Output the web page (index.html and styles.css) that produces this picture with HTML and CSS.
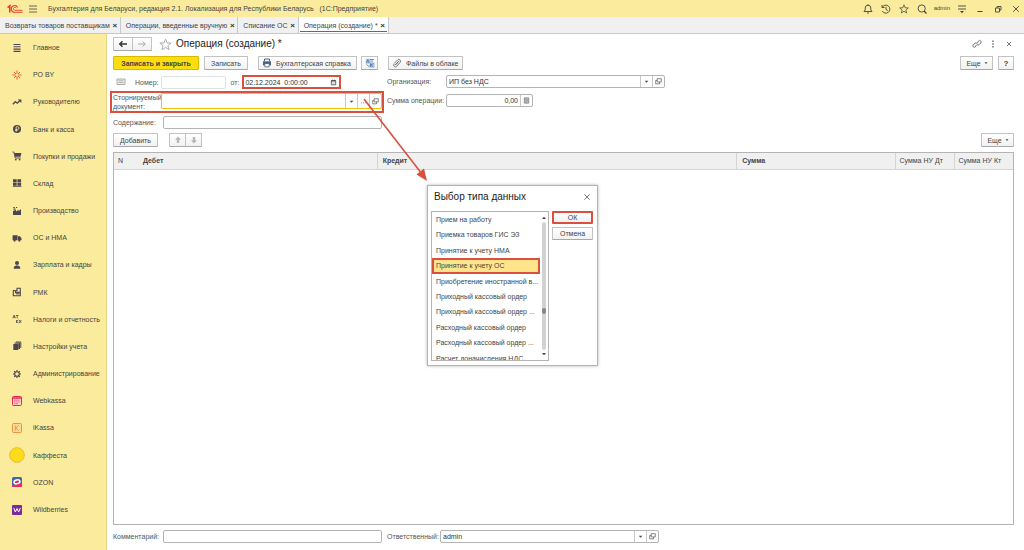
FILE: index.html
```html
<!DOCTYPE html>
<html lang="ru">
<head>
<meta charset="utf-8">
<title>Операция (создание) *</title>
<link rel="stylesheet" href="styles.css">
</head>
<body>
<svg class="defs" aria-hidden="true">
  <symbol id="open" viewBox="0 0 8 8"><path d="M2.5.8h4.7v3.7H2.5zM2.5 2.8H.8v3.9h4.4V4.5" fill="none" stroke="#555" stroke-width=".8"/></symbol>
  <symbol id="down" viewBox="0 0 8 8"><path d="M2 3h4L4 5.3z" fill="#444"/></symbol>
  <symbol id="star" viewBox="0 0 12 12"><path d="M6 1l1.4 3.5 3.8.2-3 2.4 1 3.7L6 8.7l-3.200 2.100 1-3.700-3-2.400 3.800-.2z" fill="none" stroke="currentColor" stroke-width=".9"/></symbol>
</svg>
<header class="topbar">
  <svg class="logo" viewBox="0 0 16 10"><g fill="none" stroke="#e5402f"><path d="M.6 3.600L2.800 1.800V8.600" stroke-width="1.600"/><path d="M10.600 3.500A3.300 3.300 0 1 0 7.900 8.200H15.500" stroke-width="1.100"/><path d="M9.300 4A1.500 1.500 0 1 0 7.900 6.300H15.500" stroke-width=".9"/></g></svg>
  <button class="icon-btn" aria-label="Меню"><svg viewBox="0 0 10 10"><path d="M1 2h8M1 5h8M1 8h8" stroke="#555" stroke-width=".9"/></svg></button>
  <span class="app-title">Бухгалтерия для Беларуси, редакция 2.1. Локализация для Республики Беларусь &nbsp; (1С:Предприятие)</span>
  <div class="top-tools">
    <button class="icon-btn" aria-label="Уведомления"><svg viewBox="0 0 10 10"><path d="M1 7.500h8L7.800 6V4a2.800 2.800 0 0 0-5.600 0v2zM4 9h2M5 .3v1" fill="none" stroke="#444" stroke-width=".9"/></svg></button>
    <button class="icon-btn" aria-label="История"><svg viewBox="0 0 10 10"><path d="M1 1v2.500h2.500M1.300 3.300A4 4 0 1 1 1.300 7M5 2.800V5.500l1.800 1" fill="none" stroke="#444" stroke-width=".9"/></svg></button>
    <button class="icon-btn" aria-label="Избранное"><svg viewBox="0 0 12 12"><use href="#star"/></svg></button>
    <button class="icon-btn" aria-label="Поиск"><svg viewBox="0 0 10 10"><circle cx="4.700" cy="4.500" r="3.600" fill="none" stroke="#444" stroke-width=".9"/><path d="M7 7l2.500 2.500" stroke="#444" stroke-width="1.200"/></svg></button>
    <span class="user">admin</span>
    <button class="icon-btn" aria-label="Настройки"><svg viewBox="0 0 10 10"><path d="M1 2h8M1 5h8" stroke="#444" stroke-width=".9"/><path d="M3 7h4L5 9.300z" fill="#444"/></svg></button>
    <div class="window-tools">
      <button class="icon-btn" aria-label="Свернуть"><svg viewBox="0 0 10 10"><path d="M2.500 7.500h5" stroke="#444"/></svg></button>
      <button class="icon-btn" aria-label="Восстановить"><svg viewBox="0 0 10 10"><path d="M2.500 4h4v4h-4zM4 4V2.500h4V6H6.500" fill="none" stroke="#444" stroke-width=".9"/></svg></button>
      <button class="icon-btn" aria-label="Закрыть"><svg viewBox="0 0 10 10"><path d="M2.200 2.200l5.600 5.600M7.800 2.200L2.200 7.800" stroke="#444" stroke-width=".9"/></svg></button>
    </div>
  </div>
</header>
<nav class="tabs" aria-label="Открытые окна">
  <div class="tab"><a href="#">Возвраты товаров поставщикам</a><button aria-label="Закрыть">×</button></div>
  <div class="tab"><a href="#">Операции, введенные вручную</a><button aria-label="Закрыть">×</button></div>
  <div class="tab"><a href="#">Списание ОС</a><button aria-label="Закрыть">×</button></div>
  <div class="tab active"><a href="#">Операция (создание) *</a><button aria-label="Закрыть">×</button></div>
</nav>
<div class="workspace">
  <nav class="sidebar" aria-label="Разделы">
    <a href="#"><svg viewBox="0 0 10 10"><path d="M1.500 1.500h7M1.500 3.800h7M1.500 6.100h7M1.500 8.400h7" stroke="#4c4650" stroke-width="1.100"/></svg>Главное</a>
    <a href="#"><svg viewBox="0 0 10 10"><path d="M5 .5v3.200M5 6.300v3.200M.5 5h3.200M6.300 5h3.200M2 2l2 2M6 6l2 2M8 2L6 4M4 6L2 8" stroke="#e8442c" stroke-width=".9"/></svg>РО BY</a>
    <a href="#"><svg viewBox="0 0 10 10"><path d="M.8 7.200l2.500-2.500 2 1.500L8 3.500" fill="none" stroke="#4c4650" stroke-width="1.300"/><path d="M5.800 2.400h3.600V6z" fill="#4c4650"/></svg>Руководителю</a>
    <a href="#"><svg viewBox="0 0 10 10"><circle cx="5" cy="5" r="4" fill="#4c4650"/><path d="M4.200 7.700V2.700h1.400a1.300 1.300 0 0 1 0 2.700H3.200M3.200 6.500h2.400" fill="none" stroke="#fbea9a" stroke-width=".8"/></svg>Банк и касса</a>
    <a href="#"><svg viewBox="0 0 10 10"><path d="M2.200 2h7.200L8.500 5.800H3z" fill="#4c4650"/><path d="M.5 1h1.400l1.300 6h5.500" fill="none" stroke="#4c4650" stroke-width=".9"/><circle cx="3.800" cy="8.600" r=".9" fill="#4c4650"/><circle cx="7.600" cy="8.600" r=".9" fill="#4c4650"/></svg>Покупки и продажи</a>
    <a href="#"><svg viewBox="0 0 10 10"><path d="M1 1.200h3.700v3.300H1zM5.400 1.200h3.700v3.300H5.400zM1 5.100h3.700v2.700H1zM5.400 5.100h3.700v2.700H5.400zM.7 8.200h8.800v.9H.7z" fill="#4c4650"/></svg>Склад</a>
    <a href="#"><svg viewBox="0 0 10 10"><path d="M1 9V5L4 3.700v1.800L6.500 3.700v1.500L9 2.900V9z" fill="#4c4650"/><path d="M1.200 1.500h1.500M1.500 3.200h2M4 1.500h1.200" stroke="#4c4650" stroke-width="1.200"/></svg>Производство</a>
    <a href="#"><svg viewBox="0 0 10 10"><path d="M.6 2.200h5v5h-5zM6 3.300h2l1.500 2v1.900H6z" fill="#4c4650"/><circle cx="2.600" cy="7.600" r="1.100" fill="#4c4650"/><circle cx="7.300" cy="7.600" r="1.100" fill="#4c4650"/></svg>ОС и НМА</a>
    <a href="#"><svg viewBox="0 0 10 10"><circle cx="5" cy="3" r="2" fill="#4c4650"/><path d="M1.800 8.800V7.500C1.800 6.200 3.500 6 4.300 5.500h1.400c.8.500 2.500.7 2.500 2v1.300z" fill="#4c4650"/></svg>Зарплата и кадры</a>
    <a href="#"><svg viewBox="0 0 10 10"><path d="M1 3.500h2.500M1.300 3.500v5.200h7V1.200H5v2.500H3.500v2H8" fill="none" stroke="#4c4650" stroke-width="1.100"/><path d="M4 4.500h3.500v3H4z" fill="#4c4650" opacity=".7"/></svg>РМК</a>
    <a href="#"><svg viewBox="0 0 10 10"><g fill="none" stroke="#4c4650" stroke-width=".8"><path d="M.8 4.300L2.200 1l1.200 3.300M1.300 3.200h1.700M4 1.500h2.500M5.200 1.500v2.800M4.500 6v3M6.500 6l-2 1.500 2 1.500M7.200 6l2 3M9.200 6l-2 3"/></g></svg>Налоги и отчетность</a>
    <a href="#"><svg viewBox="0 0 10 10"><path d="M1.300 3h5v6h-5z" fill="#4c4650"/><path d="M2.500 2h5v6M4 1h4.800v6" fill="none" stroke="#4c4650"/><path d="M3 2.500h4.500V8H6.500z" fill="#4c4650" opacity=".7"/></svg>Настройки учета</a>
    <a href="#"><svg viewBox="0 0 10 10"><circle cx="5" cy="5" r="2.300" fill="none" stroke="#4c4650" stroke-width="1.100"/><path d="M5 1v1.500M5 7.500V9M1 5h1.500M7.500 5H9M2.200 2.200l1 1M6.800 6.800l1 1M7.800 2.200l-1 1M3.200 6.800l-1 1" stroke="#4c4650" stroke-width="1.200"/></svg>Администрирование</a>
    <a href="#"><svg viewBox="0 0 10 10"><rect x=".5" y=".5" width="9" height="9" rx="1" fill="#fbd3d2" stroke="#e9294f"/><path d="M.5 2h9" stroke="#e9294f" stroke-width="1.500"/><path d="M2.200 4.200h5.600M2.200 6h5.600M2.200 7.800h3.600" stroke="#e9294f" stroke-width=".8" stroke-dasharray="1.300 .7"/></svg>Webkassa</a>
    <a href="#"><svg viewBox="0 0 10 10"><rect x=".5" y=".5" width="9" height="9" rx="1" fill="#fbdc96" stroke="#e58a3c" stroke-width=".9"/><path d="M3.300 2.300v5.400M6.800 2.300L3.600 5l3.200 2.700" fill="none" stroke="#e58a3c" stroke-width=".8"/></svg>iKassa</a>
    <a href="#"><svg class="big" viewBox="0 0 16 16"><circle cx="8" cy="8" r="7.300" fill="#fbdc1a" stroke="#e2a22c" stroke-width=".9" stroke-dasharray="1.500 .5"/></svg>Каффеста</a>
    <a href="#"><svg viewBox="0 0 10 10"><rect width="10" height="10" rx="1.500" fill="#3d67b1"/><path d="M0 7.500c3 1 7 0 10-2v3A1.500 1.500 0 0 1 8.500 10h-7A1.500 1.500 0 0 1 0 8.500z" fill="#ef2c57"/><ellipse cx="5" cy="4.800" rx="3" ry="1.900" transform="rotate(-15 5 4.800)" fill="#e4294f" stroke="#fff" stroke-width="1.500"/></svg>OZON</a>
    <a href="#"><svg viewBox="0 0 10 10"><rect width="10" height="10" rx="1" fill="#7d2a9a"/><path d="M1.800 3l1.500 4L5 3.500 6.600 7l1.700-4" fill="none" stroke="#fff"/></svg>Wildberries</a>
  </nav>
  <main class="main">
    <div class="row head">
      <div class="pair">
        <button class="btn" aria-label="Назад"><svg viewBox="0 0 10 10"><path d="M9 5H2M4.500 2.300L1.700 5l2.800 2.700" fill="none" stroke="#333" stroke-width="1.400"/></svg></button>
        <button class="btn" aria-label="Вперед"><svg viewBox="0 0 10 10"><path d="M1 5h7M5.500 2.300L8.300 5 5.500 7.700" fill="none" stroke="#aaa"/></svg></button>
      </div>
      <button class="icon-btn fav" aria-label="В избранное"><svg viewBox="0 0 12 12"><use href="#star"/></svg></button>
      <h1>Операция (создание) *</h1>
      <div class="head-tools">
        <button class="icon-btn" aria-label="Ссылка"><svg viewBox="0 0 10 10"><path d="M4.500 5.700L3.300 7.900a1.500 1.500 0 0 1-2.200-2L3 4.200a1.500 1.500 0 0 1 2 .2M5.300 4.300L6.500 2a1.500 1.500 0 0 1 2.300 2L7 5.800a1.500 1.500 0 0 1-2-.2" fill="none" stroke="#666" stroke-width=".9"/></svg></button>
        <button class="icon-btn" aria-label="Действия"><svg viewBox="0 0 10 10"><path d="M4.300 1.500h1.400v1.400H4.300zM4.300 4.300h1.400v1.400H4.300zM4.300 7.100h1.400v1.400H4.300z" fill="#666"/></svg></button>
        <button class="icon-btn" aria-label="Закрыть"><svg viewBox="0 0 10 10"><path d="M3 3l4 4M7 3L3 7" stroke="#666" stroke-width=".9"/></svg></button>
      </div>
    </div>
    <div class="row toolbar">
      <button class="btn primary">Записать и закрыть</button>
      <button class="btn save">Записать</button>
      <button class="btn report"><svg viewBox="0 0 10 10"><path d="M2.500 3V1h5v2" fill="none" stroke="#476080"/><path d="M1 3.300h8v4H1z" fill="#476080"/><path d="M2.800 5.500h4.400v3.300H2.800z" fill="#fff" stroke="#476080" stroke-width=".8"/></svg>Бухгалтерская справка</button>
      <button class="btn square" aria-label="Дт Кт"><svg viewBox="0 0 10 10"><path d="M.8.8h5v5h-5zM4.500 4.500h5v5h-5z" fill="#a9c5e0"/><path d="M1.500 5l1.300-3.500L4.200 5M5 1.500h4M7 1.500v3M1.500 6.500l3 2.500M5.500 5.500v3.500M8.500 5.500l-3 1.700 3 1.800" stroke="#4678a8" stroke-width=".8" fill="none"/></svg></button>
      <button class="btn files"><svg viewBox="0 0 10 10"><path d="M3 6.500l3-3.300M1.800 5.200L5 1.800a1.700 1.700 0 0 1 2.700 0 1.700 1.700 0 0 1 0 2.300L4.300 8a1.700 1.700 0 0 1-2.600-2.300M3 6.800l3.600-4" transform="translate(.4 .3)" fill="none" stroke="#666" stroke-width=".9"/></svg>Файлы в облаке</button>
      <button class="btn more push">Еще<svg class="caret"><use href="#down"/></svg></button>
      <button class="btn help">?</button>
    </div>
    <form class="form">
      <div class="number-row">
        <svg class="status" viewBox="0 0 10 8"><path d="M1 1h8v5.500H1z" fill="#eee" stroke="#999" stroke-width=".8"/><path d="M2.500 2.800h5M2.500 4.500h5" stroke="#999" stroke-width=".7"/></svg>
        <label for="num">Номер:</label>
        <span class="field pale num"><input id="num"></span>
        <label class="from" for="date">от:</label>
        <span class="field marked date"><input id="date" value="02.12.2024&nbsp; 0:00:00"><button type="button" aria-label="Календарь"><svg viewBox="0 0 8 8"><path d="M1.500 2h5v4.700h-5z" fill="#ddd" stroke="#444" stroke-width=".8"/><path d="M1.200 2h5.600M2.700.8v1M5.300.8v1" stroke="#444"/></svg></button></span>
      </div>
      <div class="cell">
        <label class="right-label" for="org">Организация:</label>
        <span class="field org"><input id="org" value="ИП без НДС"><button type="button" aria-label="Выбрать"><svg><use href="#down"/></svg></button><button type="button" aria-label="Открыть"><svg><use href="#open"/></svg></button></span>
      </div>
      <div class="storno">
        <label for="doc">Сторнируемый документ:</label>
        <span class="field focus"><input id="doc"><button type="button" aria-label="Список"><svg><use href="#down"/></svg></button><button type="button" aria-label="Выбрать"><svg viewBox="0 0 8 8"><path d="M1 5.500h1M3.500 5.500h1M6 5.500h1" stroke="#777"/></svg></button><button type="button" aria-label="Открыть"><svg><use href="#open"/></svg></button></span>
      </div>
      <div class="cell">
        <label class="right-label" for="sum">Сумма операции:</label>
        <span class="field sum"><input id="sum" value="0,00"><button type="button" aria-label="Калькулятор"><svg viewBox="0 0 8 8"><path d="M1.500 1h5v6h-5z" fill="#ddd" stroke="#666" stroke-width=".8"/><path d="M2.300 2.500h3.400M2.500 4.200h3M2.500 5.700h3" stroke="#666" stroke-width=".7"/></svg></button></span>
      </div>
      <div class="cell content">
        <label class="left-label" for="text">Содержание:</label>
        <span class="field"><input id="text"></span>
      </div>
    </form>
    <div class="row commands">
      <button class="btn add">Добавить</button>
      <div class="pair arrows">
        <button class="btn" aria-label="Вверх"><svg viewBox="0 0 10 10"><path d="M5 1.500l3 3.200H6.200v3.300H3.800V4.700H2z" fill="#b4b8bc"/></svg></button>
        <button class="btn" aria-label="Вниз"><svg viewBox="0 0 10 10"><path d="M5 8.500l3-3.200H6.200V2H3.800v3.300H2z" fill="#b4b8bc"/></svg></button>
      </div>
      <button class="btn more push">Еще<svg class="caret"><use href="#down"/></svg></button>
    </div>
    <div class="grid">
      <table>
        <colgroup><col class="c-n"><col class="c-debit"><col class="c-credit"><col class="c-sum"><col class="c-nu"><col class="c-nu"></colgroup>
        <thead><tr><th class="light">N</th><th>Дебет</th><th>Кредит</th><th>Сумма</th><th class="light">Сумма НУ Дт</th><th class="light">Сумма НУ Кт</th></tr></thead>
      </table>
    </div>
    <footer class="foot">
      <div class="cell">
        <label class="left-label" for="comment">Комментарий:</label>
        <span class="field"><input id="comment"></span>
      </div>
      <div class="cell">
        <label class="resp-label" for="resp">Ответственный:</label>
        <span class="field"><input id="resp" value="admin"><button type="button" aria-label="Выбрать"><svg><use href="#down"/></svg></button><button type="button" aria-label="Открыть"><svg><use href="#open"/></svg></button></span>
      </div>
    </footer>
  </main>
</div>
<svg class="pointer" viewBox="0 0 66 86" aria-hidden="true"><path d="M1 1l58 75" stroke="#d9503f" stroke-width="1.600"/><path d="M64 83l-10.500-6.500 7.500-6z" fill="#d9503f"/></svg>
<section class="dialog" role="dialog" aria-labelledby="dlg">
  <div class="dialog-head"><h2 id="dlg">Выбор типа данных</h2><button class="icon-btn" aria-label="Закрыть"><svg viewBox="0 0 10 10"><path d="M2.300 2.300l5.400 5.400M7.700 2.300L2.300 7.700" stroke="#555" stroke-width=".8"/></svg></button></div>
  <div class="dialog-body">
    <div class="list">
      <ul role="listbox" aria-label="Типы данных">
        <li role="option">Прием на работу</li>
        <li role="option">Приемка товаров ГИС ЭЗ</li>
        <li role="option">Принятие к учету НМА</li>
        <li role="option" class="selected" aria-selected="true">Принятие к учету ОС</li>
        <li role="option">Приобретение иностранной в...</li>
        <li role="option">Приходный кассовый ордер</li>
        <li role="option">Приходный кассовый ордер ...</li>
        <li role="option">Расходный кассовый ордер</li>
        <li role="option">Расходный кассовый ордер ...</li>
        <li role="option">Расчет доначисления НДС</li>
      </ul>
      <div class="scroll"><svg viewBox="0 0 8 8"><path d="M2 5h4L4 2.800z" fill="#444"/></svg><div class="track"><div class="thumb"></div></div><svg><use href="#down"/></svg></div>
    </div>
    <div class="dialog-buttons"><button class="btn ok">ОК</button><button class="btn">Отмена</button></div>
  </div>
</section>
</body>
</html>
```
FILE: styles.css
```css
* { box-sizing: border-box; }
body {
  margin: 0;
  min-height: 100vh;
  display: flex;
  flex-direction: column;
  position: relative;
  background: #fff;
  color: #444;
  font: 7px/9px "Liberation Sans", Arial, sans-serif;
}
.defs { position: absolute; width: 0; height: 0; }
button, input { font: inherit; color: inherit; margin: 0; padding: 0; }
a { color: inherit; text-decoration: none; }
svg { display: block; flex: none; width: 8px; height: 8px; }
h1, h2 { margin: 0; font-weight: normal; color: #222; }
label { color: #555; }

.icon-btn { border: 0; background: none; display: flex; align-items: center; justify-content: center; width: 10px; height: 10px; }
.icon-btn svg { width: 10px; height: 10px; }

.topbar { display: flex; align-items: center; height: 17px; background: #fbeb9c; padding: 0 3px 0 7px; }
.logo { width: 16px; height: 10px; margin-right: 5px; }
.app-title { margin-left: 10px; white-space: nowrap; }
.top-tools { margin-left: auto; display: flex; align-items: center; gap: 8px; color: #444; }
.user { margin: 0 -1px; font-size: 6px; }
.window-tools { display: flex; gap: 8px; }

.tabs { display: flex; height: 17px; background: #f0f0f0; border-bottom: 1px solid #c8c8c8; }
.tab { display: flex; align-items: center; gap: 2px; padding: 0 2px 0 5px; border-right: 1px solid #c8c8c8; white-space: nowrap; }
.tab button { border: 0; background: none; width: 6px; font-size: 8px; font-weight: bold; color: #333; }
.tab.active { position: relative; background: #fff; }
.tab.active::after { content: ""; position: absolute; left: 1px; right: 1px; bottom: 1px; height: 1px; background: #13965a; }

.workspace { flex: 1; display: flex; }
.sidebar { width: 107px; flex: none; display: flex; flex-direction: column; padding: 0 0 27px; background: #fbeb9c; border-right: 1px solid #e6d68c; }
.sidebar a { flex: 1; display: grid; grid-template-columns: 16px 1fr; column-gap: 8px; align-items: center; padding: 0 0 0 9px; white-space: nowrap; }
.sidebar svg { width: 10px; height: 10px; justify-self: center; }
.sidebar .big { width: 16px; height: 16px; }

.main { flex: 1; min-width: 0; display: flex; flex-direction: column; padding: 3px 10px 7px 6px; }
.row { display: flex; align-items: center; height: 14px; }
.btn {
  display: flex; align-items: center; justify-content: center; gap: 4px;
  height: 14px; padding: 0 7px;
  border: 1px solid #c2c2c2; border-bottom-color: #a8a8a8; border-radius: 1px;
  background: linear-gradient(#fff, #f1f1f1);
  white-space: nowrap;
}
.btn svg { width: 10px; height: 10px; }
.btn .caret { width: 6px; height: 6px; }
.primary { background: #fbdd10; border-color: #d9b800; font-weight: bold; min-width: 86px; }
.pair { display: flex; }
.pair .btn { width: 20px; padding: 0; }
.pair .btn + .btn { margin-left: -1px; }
.fav { width: 14px; height: 14px; margin: 0 4px 0 6px; color: #aaa; }
.fav svg { width: 13px; height: 13px; }
h1 { font-size: 10px; line-height: 14px; }
.head-tools { margin-left: auto; display: flex; gap: 6px; }
.toolbar { margin-top: 5px; }
.save { margin-left: 5px; min-width: 44px; padding: 0 5px; }
.report { margin-left: 10px; min-width: 99px; }
.report, .files { justify-content: flex-start; padding: 0 3px; }
.square { margin-left: 4px; width: 17px; padding: 0; }
.files { margin-left: 10px; min-width: 75px; }
.push { margin-left: auto; }
.more { width: 33px; padding: 0 2px 0 4px; gap: 2px; }
.help { margin-left: 5px; width: 16px; padding: 0; font-size: 8px; font-weight: bold; }

.form { display: grid; grid-template-columns: 269fr 278fr 344fr; column-gap: 5px; row-gap: 2px; align-items: start; margin-top: 5px; }
.number-row, .cell { display: flex; align-items: center; grid-column: 1; }
.form .number-row + .cell, .form .storno + .cell { grid-column: 2; }
.form .storno + .cell { margin-top: 3px; }
.status { width: 10px; height: 8px; margin: 0 9px 0 3px; }
.field { display: flex; flex: 1; min-width: 0; height: 13px; border: 1px solid #b4b4b4; border-radius: 2px; background: #fff; }
.field input { flex: 1; width: 0; min-width: 0; border: 0; outline: 0; background: none; padding: 0 2px; color: #333; }
.field button { width: 12px; border: 0; border-left: 1px solid #c8c8c8; background: none; display: flex; align-items: center; justify-content: center; }
.field svg { width: 7px; height: 7px; }
.pale { border-color: #e0e0e0; }
.num { flex: none; width: 65px; margin-left: 2px; }
.from { margin: 0 3px 0 5px; }
.marked { border: 2px solid #d9503f; border-radius: 0; }
.date { flex: none; width: 99px; height: 14px; }
.date input { padding: 0 1px; }
.date button { border-left: 0; }
.right-label { width: 59px; white-space: nowrap; }
.left-label { width: 50px; }
.resp-label { width: 53px; white-space: nowrap; }
.sum { flex: none; width: 87px; }
.sum input { text-align: right; }
.storno { grid-column: 1; display: flex; align-items: flex-start; margin: 0 -2px 0 -3px; padding-left: 1px; border: 2px solid #d9503f; height: 22px; }
.storno label { width: 48px; flex: none; }
.focus { height: 16px; border-color: #f0c400; }
.content { margin-top: 1px; }
.commands { margin-top: 4px; }
.add { min-width: 45px; padding: 0 5px; }
.arrows { margin-left: 11px; }
.arrows .btn { width: 17px; }

.grid { flex: 1; margin-top: 5px; border: 1px solid #b4b4b4; }
table { width: 100%; border-collapse: collapse; table-layout: fixed; }
th { height: 16px; padding: 0 5px; text-align: left; background: #f0f0f0; border-bottom: 1px solid #d4d4d4; border-right: 1px solid #d4d4d4; white-space: nowrap; }
th:first-child { border-right: 0; }
th:last-child { border-right: 0; }
th.light { font-weight: normal; padding: 0 4px; }
.c-n { width: 24px; }
.c-debit { width: 26.6%; }
.c-credit { width: 40%; }
.c-nu { width: 59px; }
.foot { display: grid; grid-template-columns: 269fr 272fr 350fr; column-gap: 5px; margin-top: 5px; }
.foot .cell { grid-column: auto; }

.pointer { position: absolute; left: 363px; top: 98px; width: 66px; height: 86px; }
.dialog { position: absolute; left: 427px; top: 185px; width: 171px; padding: 5px 4px 4px 3px; background: #fff; border: 1px solid #b4b4b4; box-shadow: 0 0 3px rgba(0, 0, 0, .3); }
.dialog-head { display: flex; align-items: center; justify-content: space-between; height: 12px; padding: 0 1px 0 3px; }
h2 { font-size: 10px; line-height: 12px; }
.dialog-body { display: flex; gap: 3px; margin-top: 8px; }
.list { display: flex; flex: 1; min-width: 0; height: 150px; border: 1px solid #b4b4b4; overflow: hidden; }
.list ul { flex: 1; min-width: 0; margin: 0; padding: 0; list-style: none; display: grid; grid-template-rows: repeat(10, 10.4%); }
.list li { padding: 3px 0 0 4px; white-space: nowrap; }
.list .selected { padding: 1px 0 0 2px; background: #ffe48c; border: 2px solid #d9503f; }
.scroll { width: 8px; display: flex; flex-direction: column; align-items: center; padding: 2px 0; }
.track { flex: 1; width: 4px; border-radius: 2px; background: #d2d2d2; display: flex; align-items: flex-end; padding-bottom: 36px; }
.thumb { width: 4px; height: 6px; border-radius: 2px; background: #888; }
.dialog-buttons { width: 41px; display: flex; flex-direction: column; gap: 3px; }
.dialog-buttons .btn { height: 13px; padding: 0; }
.dialog-buttons .ok { border: 2px solid #d9503f; }
```
